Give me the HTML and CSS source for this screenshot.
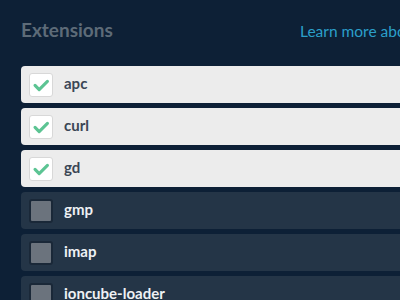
FILE: index.html
```html
<!DOCTYPE html>
<html>
<head>
<meta charset="utf-8">
<link rel="stylesheet" href="styles.css">
</head>
<body>
<div class="page">
  <div class="header">
    <h2 class="title">Extensions</h2>
    <a class="learn" href="#">Learn more about extensions</a>
  </div>
  <ul class="list">
    <li class="row on"><span class="box"><svg viewBox="0 0 24 24" width="24" height="24"><path d="M5.5 12.5 L10 17 L19 8" fill="none" stroke="#5cc493" stroke-width="3.4" stroke-linecap="round" stroke-linejoin="round"/></svg></span><span class="name">apc</span></li>
    <li class="row on"><span class="box"><svg viewBox="0 0 24 24" width="24" height="24"><path d="M5.5 12.5 L10 17 L19 8" fill="none" stroke="#5cc493" stroke-width="3.4" stroke-linecap="round" stroke-linejoin="round"/></svg></span><span class="name">curl</span></li>
    <li class="row on"><span class="box"><svg viewBox="0 0 24 24" width="24" height="24"><path d="M5.5 12.5 L10 17 L19 8" fill="none" stroke="#5cc493" stroke-width="3.4" stroke-linecap="round" stroke-linejoin="round"/></svg></span><span class="name">gd</span></li>
    <li class="row off"><span class="box"></span><span class="name">gmp</span></li>
    <li class="row off"><span class="box"></span><span class="name">imap</span></li>
    <li class="row off"><span class="box"></span><span class="name">ioncube-loader</span></li>
  </ul>
</div>
</body>
</html>
```
FILE: styles.css
```css
html, body {
  margin: 0;
  padding: 0;
  background: #0d2036;
  overflow: hidden;
  width: 400px;
  height: 300px;
}
.page {
  width: 520px;
  padding: 0 0 0 21px;
  font-family: Lato, "Open Sans", sans-serif;
}
.header {
  display: grid;
  grid-template-columns: 279px auto;
  align-items: baseline;
  height: 66px;
}
.title {
  margin: 0;
  padding-top: 19px;
  font-size: 19px;
  font-weight: 700;
  color: #5d6b78;
  line-height: 22px;
}
.learn {
  font-size: 15.5px;
  color: #2b9fca;
  text-decoration: none;
  white-space: nowrap;
  line-height: 20px;
}
.list {
  list-style: none;
  margin: 0;
  padding: 0;
  display: flex;
  flex-direction: column;
  gap: 5px;
}
.row {
  height: 37px;
  border-radius: 4px;
  display: flex;
  align-items: center;
  padding-left: 8px;
}
.row.on { background: #ececec; }
.row.off { background: #243547; }
.box {
  width: 24px;
  height: 24px;
  box-sizing: border-box;
  border-radius: 3px;
  display: flex;
  align-items: center;
  justify-content: center;
  margin-right: 11px;
}
.box svg { display: block; }
.on .box {
  background: #ffffff;
  border: 1px solid #d8d8d8;
}
.off .box {
  background: #6b737d;
  border: 2px solid #1a2838;
}
.name {
  font-size: 15px;
  font-weight: 700;
  padding-bottom: 3px;
}
.on .name { color: #3b4655; }
.off .name { color: #eef1f4; }
```
